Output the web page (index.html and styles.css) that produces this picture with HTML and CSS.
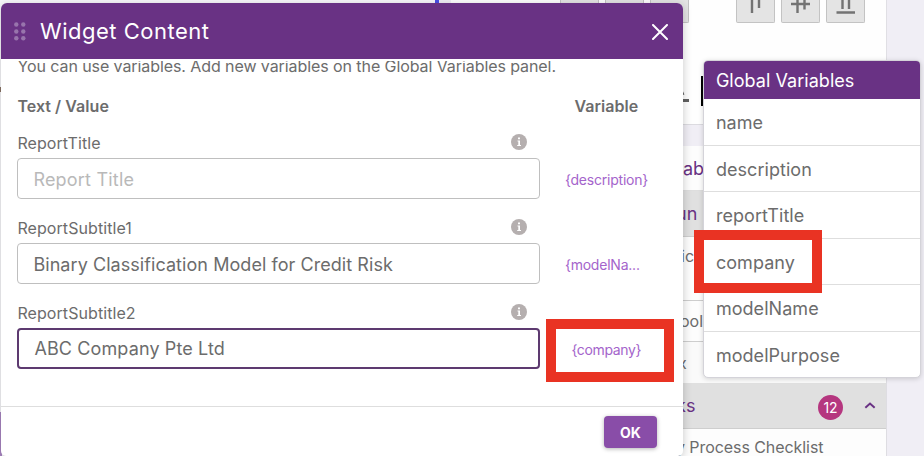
FILE: index.html
```
<!DOCTYPE html>
<html lang="en">
<head>
<meta charset="utf-8">
<title>Widget Content</title>
<link rel="stylesheet" href="styles.css">
</head>
<body>
<main class="workspace">
  <div class="canvas-strip"><i class="strip-dark"></i><i class="strip-purple"></i></div>
  <aside class="sidebar">
    <section class="toolbar">
      <div class="align-tools">
        <i class="tool"></i><i class="tool"></i><i class="tool tool-last"></i>
        <i class="tool"><svg viewBox="0 0 38 23"><path d="M15 0V13M22 0V8"/></svg></i>
        <i class="tool"><svg viewBox="0 0 38 23"><path d="M9 4H28M15.500 0V13M22.500 0V9.500"/></svg></i>
        <i class="tool"><svg viewBox="0 0 38 23"><path d="M15.500 0V9M22 0V9M9.500 12.500H28"/></svg></i>
      </div>
      <div class="font-tools">
        <svg class="font-color" viewBox="0 0 12 18"><path d="M3 1L6 8M0 13.500H12"/></svg>
        <i class="swatch"></i>
      </div>
    </section>
    <section class="tree">
      <div class="tree-row tree-title">ab</div>
      <div class="tree-row tree-group">un</div>
      <div class="tree-row tree-detail">ic</div>
      <div class="tree-row tree-item">ool</div>
      <div class="tree-row tree-item tree-end">x</div>
      <div class="tree-row tree-group tree-checks"><span>ks</span><b class="count">12</b><svg class="chevron" viewBox="0 0 10 6"><path d="M1 5L5 1.300L9 5"/></svg></div>
      <div class="tree-row tree-item tree-process">y Process Checklist</div>
    </section>
  </aside>
</main>

<section class="dialog">
  <header class="dialog-head">
    <svg class="grip" viewBox="0 0 12 19"><circle cx="2.300" cy="2.500" r="2.200"/><circle cx="9.300" cy="2.500" r="2.200"/><circle cx="2.300" cy="9.500" r="2.200"/><circle cx="9.300" cy="9.500" r="2.200"/><circle cx="2.300" cy="16.300" r="2.200"/><circle cx="9.300" cy="16.300" r="2.200"/></svg>
    <h1>Widget Content</h1>
    <svg class="close" viewBox="0 0 16 16"><path d="M1 1L15 15M15 1L1 15"/></svg>
  </header>
  <div class="dialog-body">
    <p class="hint">You can use variables. Add new variables on the Global Variables panel.</p>
    <div class="columns"><b>Text / Value</b><b class="variable-head">Variable</b></div>
    <div class="field">
      <div class="entry">
        <div class="label"><span>ReportTitle</span><svg class="info" viewBox="0 0 16 16"><circle cx="8" cy="8" r="8"/><path d="M7 3.500H9V5.300H7ZM6.500 6.600H9V11H10V12H6.200V11H7.300V7.600H6.500Z"/></svg></div>
        <div class="box placeholder">Report Title</div>
      </div>
      <div class="variable">{description}</div>
    </div>
    <div class="field">
      <div class="entry">
        <div class="label"><span>ReportSubtitle1</span><svg class="info" viewBox="0 0 16 16"><circle cx="8" cy="8" r="8"/><path d="M7 3.500H9V5.300H7ZM6.500 6.600H9V11H10V12H6.200V11H7.300V7.600H6.500Z"/></svg></div>
        <div class="box">Binary Classification Model for Credit Risk</div>
      </div>
      <div class="variable">{modelNa...</div>
    </div>
    <div class="field">
      <div class="entry">
        <div class="label"><span>ReportSubtitle2</span><svg class="info" viewBox="0 0 16 16"><circle cx="8" cy="8" r="8"/><path d="M7 3.500H9V5.300H7ZM6.500 6.600H9V11H10V12H6.200V11H7.300V7.600H6.500Z"/></svg></div>
        <div class="box focused">ABC Company Pte Ltd</div>
      </div>
      <div class="variable v-company">{company}</div>
    </div>
  </div>
  <footer class="dialog-foot"><div class="ok">OK</div></footer>
</section>

<section class="globals">
  <h2>Global Variables</h2>
  <ul>
    <li>name</li><li>description</li><li>reportTitle</li><li>company</li><li>modelName</li><li>modelPurpose</li>
  </ul>
</section>
<div class="mark mark-value"></div>
<div class="mark mark-list"></div>
</body>
</html>
```

FILE: styles.css
```
* { box-sizing: border-box; }
body { margin: 0; width: 924px; height: 456px; overflow: hidden; background: #f0eef5; color: #6c6c6c; font-family: Inter, sans-serif; position: relative; }
svg { display: block; fill: none; }
.workspace { display: flex; justify-content: space-between; width: 887px; height: 456px; }
.canvas-strip { width: 439px; border-right: 4px solid #4b50e6; background: #f8f8fb; padding-top: 87px; }
.canvas-strip i { display: block; width: 2px; }
.strip-dark { height: 5px; background: #8a7465; }
.strip-purple { margin-top: 320px; height: 44px; background: #a985c2; }
.sidebar { width: 448px; padding-left: 12px; }
.toolbar { height: 125px; background: #fefefe; border-right: 1px solid #e0dfe4; border-bottom: 1px solid #dcdbe0; }
.align-tools { display: flex; gap: 6px; justify-content: flex-end; padding-right: 21.500px; }
.tool { width: 39px; height: 23px; background: #e4e4e4; border: 1px solid #c3c3c3; border-top: 0; border-radius: 0 0 2px 2px; }
.tool-last { margin-right: 41px; }
.tool svg { width: 38px; height: 23px; stroke: #737373; stroke-width: 2.4; }
.font-tools { display: flex; padding: 61px 0 0 226px; }
.font-color { width: 12px; height: 18px; stroke: #606060; stroke-width: 3; margin: 3px 12px 0 0; }
.swatch { width: 30px; height: 30px; background: #000; margin-top: -8px; }
.tree { margin-top: 21px; background: #fdfdfd; border-right: 1px solid #dedde2; }
.tree-row { display: flex; align-items: center; padding-left: 229px; height: 41px; border-bottom: 1px solid #cecece; font-size: 16px; white-space: nowrap; }
.tree-title { height: 45px; color: #693284; font-size: 18px; padding-left: 232px; border-bottom-color: #dedede; }
.tree-group { height: 46px; background: #e0e0e0; color: #693284; font-size: 18px; padding-left: 225px; }
.tree-detail { height: 64px; align-items: flex-start; padding: 9px 0 0 230px; }
.tree-end { border: 0; background: #fafafa; padding-left: 227px; }
.tree-checks { padding: 0 10px 0 225px; }
.count { width: 25px; height: 25px; line-height: 26px; text-align: center; border-radius: 50%; background: #b5367f; color: #fff; font-size: 14px; font-weight: 400; margin: 3px 0 0 auto; }
.chevron { width: 12px; height: 7px; margin-left: 21px; stroke: #693284; stroke-width: 1.7; }
.tree-process { height: 27px; border: 0; padding-left: 225px; padding-top: 9px; align-items: center; letter-spacing: -.07px; }
.dialog { position: absolute; left: 1px; top: 3px; width: 682px; height: 453px; border-radius: 6px 6px 5px 5px; overflow: hidden; background: #fff; box-shadow: 0 2px 10px rgba(0,0,0,.22); }
.dialog-head { height: 56px; background: #693284; display: flex; align-items: center; padding: 0 15px 0 13px; color: #fff; }
.grip { width: 12px; height: 19px; fill: #9874ac; }
h1 { margin: 0 auto 0 14px; font-size: 22px; font-weight: 400; letter-spacing: .5px; line-height: 30px; white-space: nowrap; }
.close { width: 16px; height: 16px; stroke: #fff; stroke-width: 2; stroke-linecap: round; margin-top: 2px; }
.dialog-body { height: 346px; margin-top: 2px; overflow: hidden; padding-left: 16.400px; border-bottom: 1px solid #dedede; }
.hint { margin: -6px 0 0; font-size: 16px; line-height: 22px; letter-spacing: -.08px; white-space: nowrap; }
.columns { display: flex; height: 20px; line-height: 20px; margin-top: 19px; font-size: 16px; font-weight: 600; letter-spacing: .05px; }
.columns b { flex: 0 0 557px; font-weight: 600; white-space: nowrap; }
.columns .variable-head { flex-basis: auto; }
.field { display: flex; height: 85.200px; align-items: flex-start; }
.columns + .field { margin-top: 17px; }
.entry { width: 523px; }
.label { display: flex; justify-content: space-between; align-items: center; height: 20px; font-size: 16px; letter-spacing: .08px; padding-right: 13px; }
.info { width: 16px; height: 16px; fill: #b5afaf; margin-top: -3px; }
.info path { fill: #fff; }
.box { height: 41px; margin-top: 5px; border: 1px solid #bfbfbf; border-radius: 4px; display: flex; align-items: center; padding: 1px 0 0 15px; font-size: 18px; letter-spacing: .06px; white-space: nowrap; }
.placeholder { color: #b9b9b9; letter-spacing: .2px; }
.focused { border: 2px solid #5d3a70; padding-left: 15px; padding-top: 0; letter-spacing: .12px; }
.variable { color: #a464cb; font-size: 14px; letter-spacing: -.22px; line-height: 20px; margin: 36.500px 0 0 24.500px; white-space: nowrap; }
.v-company { margin-left: 31px; letter-spacing: -.36px; }
.dialog-foot { display: flex; justify-content: flex-end; padding: 9px 26px 0 0; }
.ok { width: 53px; height: 32px; line-height: 33px; border-radius: 4px; background: #894da8; color: #fff; text-align: center; font-size: 14px; font-weight: 700; box-shadow: 0 1px 4px rgba(0,0,0,.3); }
.globals { position: absolute; left: 703.400px; top: 60px; width: 217.500px; height: 318px; overflow: hidden; background: #fff; border: 1px solid #d4d3d9; border-radius: 5px; box-shadow: 0 1px 5px rgba(0,0,0,.16); }
h2 { margin: 0; height: 38px; line-height: 39px; padding-left: 11.500px; background: #693284; color: #fff; font-size: 18px; font-weight: 400; letter-spacing: .04px; white-space: nowrap; }
ul { list-style: none; margin: 0; padding: 0; }
li { height: 46.500px; line-height: 47px; padding-left: 11.500px; border-bottom: 1px solid #dedede; font-size: 18px; letter-spacing: .05px; }
li:last-child { border: 0; }
.mark { position: absolute; width: 128px; height: 63px; border: 10px solid #e93323; }
.mark-value { left: 546px; top: 319px; }
.mark-list { left: 694px; top: 230px; }
```
